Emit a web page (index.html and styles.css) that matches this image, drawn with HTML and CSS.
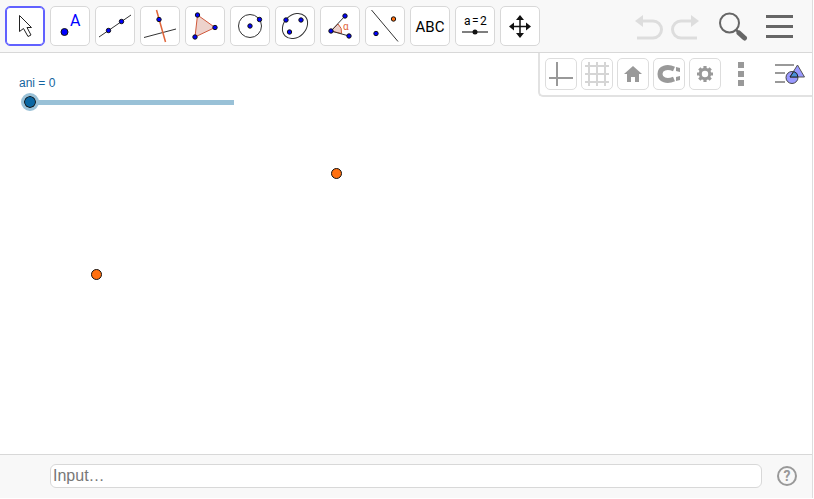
FILE: index.html
```html
<!DOCTYPE html>
<html lang="en">
<head>
    <meta charset="UTF-8">
    <meta name="viewport" content="width=device-width, initial-scale=1.0">
    <title>Applet</title>

    <link rel="stylesheet" href="styles.css">
</head>

<body>
    <div class="applet">
      <header class="toolbar">
        <div class="tools">
          <button class="tool active" type="button" aria-label="Move">
            <svg viewBox="1 1 38 38"><path d="M14.500 9.500v16l4-3 4.500 8 3-1.500-4-7.500h4.500z" fill="#fff" stroke="#222"/></svg>
          </button>
          <button class="tool" type="button" aria-label="Point">
            <svg viewBox="1 1 38 38"><circle class="pt" cx="14.500" cy="26" r="3.500"/><text class="blue" x="20" y="20">A</text></svg>
          </button>
          <button class="tool" type="button" aria-label="Line">
            <svg viewBox="1 1 38 38"><path class="line" d="M4 31L36 9"/><circle class="pt" cx="13.500" cy="24.500" r="2.200"/><circle class="pt" cx="26.500" cy="15.500" r="2.200"/></svg>
          </button>
          <button class="tool" type="button" aria-label="Perpendicular line">
            <svg viewBox="1 1 38 38"><path class="line" d="M4 31.500L36 23"/><path class="red" d="M16.500 4L25.500 36"/><circle class="pt" cx="19" cy="13.500" r="2.200"/></svg>
          </button>
          <button class="tool" type="button" aria-label="Polygon">
            <svg viewBox="1 1 38 38"><path class="area" d="M12.500 9L30 21.500L10 31z"/><circle class="pt" cx="12.500" cy="9" r="2.200"/><circle class="pt" cx="30" cy="21.500" r="2.200"/><circle class="pt" cx="10" cy="31" r="2.200"/></svg>
          </button>
          <button class="tool" type="button" aria-label="Circle">
            <svg viewBox="1 1 38 38"><circle class="line" cx="20" cy="20" r="11.500"/><circle class="pt" cx="20" cy="20" r="2.200"/><circle class="pt" cx="29.500" cy="13.500" r="2.200"/></svg>
          </button>
          <button class="tool" type="button" aria-label="Ellipse">
            <svg viewBox="1 1 38 38"><ellipse class="line" cx="20" cy="20" rx="14" ry="11" transform="rotate(-45 20 20)"/><circle class="pt" cx="11" cy="14" r="2.200"/><circle class="pt" cx="26" cy="14" r="2.200"/><circle class="pt" cx="14.500" cy="26" r="2.200"/></svg>
          </button>
          <button class="tool" type="button" aria-label="Angle">
            <svg viewBox="1 1 38 38"><path class="area" d="M11 25L18 18Q22.500 22 21.500 27.500z"/><path class="line" d="M25 10L11 25L29 30"/><circle class="pt" cx="25" cy="10" r="2.200"/><circle class="pt" cx="11" cy="25" r="2.200"/><circle class="pt" cx="29" cy="30" r="2.200"/><text class="alpha" x="23" y="24">α</text></svg>
          </button>
          <button class="tool" type="button" aria-label="Reflect">
            <svg viewBox="1 1 38 38"><path class="line" d="M6.500 4L33 35.500"/><circle class="pt" cx="11" cy="27.500" r="2.200"/><circle class="pt orange" cx="28.500" cy="13" r="2.200"/></svg>
          </button>
          <button class="tool" type="button" aria-label="Text">
            <svg viewBox="1 1 38 38"><text class="abc" x="20" y="26">ABC</text></svg>
          </button>
          <button class="tool" type="button" aria-label="Slider">
            <svg viewBox="1 1 38 38"><text class="eq" y="19"><tspan x="9">a</tspan><tspan x="17">=</tspan><tspan x="25">2</tspan></text><path d="M7 26H33" stroke="#555" stroke-width="1.500"/><circle cx="20" cy="26" r="2.500" fill="#111"/></svg>
          </button>
          <button class="tool" type="button" aria-label="Move view">
            <svg viewBox="1 1 38 38"><path d="M20 13V28M13 20.500H27" stroke="#111" stroke-width="1.500"/><path d="M20 9l4 5h-8zM20 32l4-5h-8zM9 20.500l5-4v8zM31 20.500l-5-4v8z" fill="#111"/></svg>
          </button>
        </div>
        <div class="actions">
          <button class="action faded" type="button" aria-label="Undo">
            <svg viewBox="0 0 30 30"><path d="M8 10H18A8.500 8.500 0 0 1 18 27H2" fill="none" stroke="currentColor" stroke-width="3"/><path d="M0 10L8 4V16z" fill="currentColor"/></svg>
          </button>
          <button class="action faded" type="button" aria-label="Redo">
            <svg viewBox="0 0 30 30"><path d="M20 10H10A8.500 8.500 0 0 0 10 27H26" fill="none" stroke="currentColor" stroke-width="3"/><path d="M28 10L20 4V16z" fill="currentColor"/></svg>
          </button>
          <button class="action search" type="button" aria-label="Search">
            <svg viewBox="0 0 30 30"><circle cx="10.500" cy="12" r="9.500" fill="none" stroke="currentColor" stroke-width="2"/><path d="M16.500 18L20 22" stroke="currentColor" stroke-width="2.500"/><path d="M20 22L25.500 27" stroke="currentColor" stroke-width="5" stroke-linecap="round"/></svg>
          </button>
          <button class="action" type="button" aria-label="Menu">
            <svg viewBox="0 0 30 30"><path d="M2 5.500H29M2 15.500H29M2 25.500H29" stroke="currentColor" stroke-width="3"/></svg>
          </button>
        </div>
      </header>

      <main class="view">
        <div class="slider">
          <label for="ani">ani = 0</label>
          <input id="ani" type="range" min="0" max="1" step="0.01" value="0">
        </div>
        <span class="point point-a"></span>
        <span class="point point-b"></span>

        <div class="stylebar">
          <button class="style-btn" type="button" aria-label="Axes">
            <svg viewBox="0 0 30 30"><path d="M11 3V27M3 19H27" stroke="#999" stroke-width="2"/></svg>
          </button>
          <button class="style-btn" type="button" aria-label="Grid">
            <svg viewBox="0 0 30 30"><path d="M7 3V27M15 3V27M23 3V27M3 7H27M3 15H27M3 23H27" stroke="#d5d5d5" stroke-width="2"/></svg>
          </button>
          <button class="style-btn" type="button" aria-label="Home">
            <svg viewBox="0 0 30 30"><path d="M15 7l9 8h-3v8h-4v-5h-4v5H9v-8H6z" fill="#999"/></svg>
          </button>
          <button class="style-btn" type="button" aria-label="Snapping">
            <svg viewBox="0 0 30 30"><path d="M20 10C13 7 6 9 6 15S13 23 20 20" fill="none" stroke="#999" stroke-width="5"/><path d="M22 8l4 1v4l-4-1zM22 18l4-1v4l-4 1z" fill="#999"/></svg>
          </button>
          <button class="style-btn" type="button" aria-label="Settings">
            <svg viewBox="0 0 30 30"><circle cx="15" cy="15" r="4.700" fill="none" stroke="#999" stroke-width="3"/><path d="M15 7v3M15 20v3M7 15h3M20 15h3M9.300 9.300l2.200 2.200M18.500 18.500l2.200 2.200M9.300 20.700l2.200-2.200M18.500 11.500l2.200-2.200" stroke="#999" stroke-width="3.200"/></svg>
          </button>
          <button class="style-btn plain dots" type="button" aria-label="More">
            <svg viewBox="0 0 30 30"><path d="M12 3h6v6h-6zM12 12h6v6h-6zM12 21h6v6h-6z" fill="#999"/></svg>
          </button>
          <button class="style-btn plain views" type="button" aria-label="Views">
            <svg viewBox="0 0 30 30"><path d="M0 6H19M0 14H10M0 23H10" stroke="#999" stroke-width="2"/><circle cx="17" cy="18.500" r="6" fill="#99f" stroke="#444"/><path d="M22.500 6L29.500 18H15z" fill="#99f" stroke="#555"/><path d="M18.800 12.500A6 6 0 0 1 23 18H15z" fill="#4a90d9" stroke="#222"/></svg>
          </button>
        </div>
      </main>

      <footer class="inputbar">
        <input class="algebra" type="text" placeholder="Input…" aria-label="Input">
        <button class="help" type="button" aria-label="Help">
          <svg viewBox="0 0 20 20"><circle cx="10" cy="10" r="9" fill="none" stroke="#999" stroke-width="2"/><text x="10" y="15">?</text></svg>
        </button>
      </footer>
    </div>
</body>
</html>
```
FILE: styles.css
```css
* {
  margin: 0;
  padding: 0;
  box-sizing: border-box;
}

body {
  padding: 0 1px 1px 0;
  font-family: Roboto, "Liberation Sans", sans-serif;
  background: #fff;
}

.applet {
  display: flex;
  flex-direction: column;
  height: calc(100vh - 1px);
  border-right: 1px solid #ddd;
}

button {
  font-family: inherit;
  background: none;
  border: none;
  cursor: pointer;
}

svg {
  display: block;
  width: 100%;
  height: 100%;
}

/* toolbar */
.toolbar {
  display: flex;
  justify-content: space-between;
  align-items: center;
  padding: 6px 18px 6px 5px;
  background: #f8f8f8;
  border-bottom: 1px solid #d8d8d8;
}

.tools {
  display: flex;
  gap: 5px;
}

.tool {
  width: 40px;
  height: 40px;
  background: #fff;
  border: 1px solid #d8d8d8;
  border-radius: 5px;
}

.tool.active {
  border-color: #6161ff;
  box-shadow: inset 0 0 0 1px #6161ff;
}

.line {
  fill: none;
  stroke: #333;
}

.red {
  stroke: #e0653a;
  stroke-width: 1.5;
}

.area {
  fill: #edd2cc;
  stroke: #d0583a;
}

.pt {
  fill: #00f;
  stroke: #111;
}

.pt.orange {
  fill: #ff7010;
}

.blue {
  fill: #00f;
  font-size: 16px;
}

.alpha {
  fill: #e0653a;
  font-size: 10px;
}

.abc {
  font-size: 15px;
  text-anchor: middle;
}

.eq {
  font-size: 12px;
}

.actions {
  display: flex;
  gap: 6px;
}

.action {
  width: 30px;
  height: 30px;
  color: #666;
}

.action.faded {
  color: #ddd;
}

.action.search {
  margin: 0 9px 0 12px;
}

/* graphics view */
.view {
  position: relative;
  flex: 1;
  background: #fff;
}

.slider {
  position: absolute;
  left: 19px;
  top: 23px;
  display: flex;
  flex-direction: column;
  gap: 3px;
  color: #1565a0;
  font: 12px/14px "Liberation Sans", Arial, sans-serif;
}

.slider input {
  width: 213px;
  height: 18px;
  margin-left: 2px;
  appearance: none;
  background: linear-gradient(#99c1d7, #99c1d7) right center / 204px 5px no-repeat;
}

.slider input::-webkit-slider-thumb {
  appearance: none;
  width: 18px;
  height: 18px;
  background: #0a67a3;
  background-clip: padding-box;
  border: 3px solid #99c1d7;
  border-radius: 50%;
  box-shadow: inset 0 0 0 1px #111;
}

.point {
  position: absolute;
  width: 11px;
  height: 11px;
  background: #ff7010;
  border: 1px solid #111;
  border-radius: 50%;
}

.point-a {
  left: 331px;
  top: 115px;
}

.point-b {
  left: 91px;
  top: 216px;
}

.stylebar {
  position: absolute;
  top: 0;
  right: 0;
  display: flex;
  gap: 4px;
  padding: 5px 6px 5px 5px;
  background: #fff;
  border: solid #e2e2e2;
  border-width: 0 0 2px 2px;
  border-radius: 0 0 0 5px;
}

.style-btn {
  width: 32px;
  height: 32px;
  border: 1px solid #ddd;
  border-radius: 5px;
}

.style-btn.plain {
  border-color: transparent;
}

.style-btn.views {
  margin-left: 13px;
}

/* input bar */
.inputbar {
  display: flex;
  align-items: center;
  gap: 15px;
  padding: 9px 15px 10px 50px;
  background: #f8f8f8;
  border-top: 1px solid #d8d8d8;
}

.algebra {
  flex: 1;
  height: 24px;
  padding: 0 2px;
  font: 16px "Liberation Sans", Arial, sans-serif;
  background: #fff;
  border: 1px solid #d8d8d8;
  border-radius: 6px;
}

.algebra::placeholder {
  color: #777;
}

.help {
  width: 20px;
  height: 20px;
}

.help text {
  fill: #999;
  font-size: 14px;
  font-weight: bold;
  text-anchor: middle;
}
```
